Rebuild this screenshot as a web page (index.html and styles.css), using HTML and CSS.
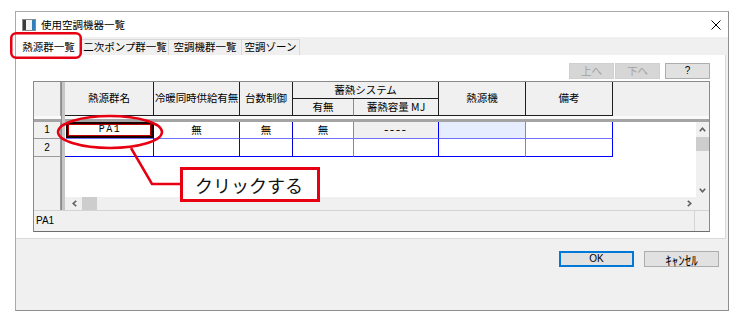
FILE: index.html
```html
<!DOCTYPE html>
<html lang="ja">
<head>
<meta charset="utf-8">
<title>使用空調機器一覧</title>
<link rel="stylesheet" href="styles.css">
</head>
<body>
<div class="screen">
  <div class="window">
    <div class="titlebar">
      <svg class="app-icon" width="14" height="12" viewBox="0 0 14 12">
        <rect x="0.5" y="0.5" width="13" height="11" fill="#f2f2f2" stroke="#8a8a8a"/>
        <rect x="1" y="1" width="3" height="10" fill="#3a3a3a"/>
        <rect x="10" y="1" width="3" height="10" fill="#2f7fb8"/>
      </svg>
      <span class="title">使用空調機器一覧</span>
      <svg class="close" width="10" height="10" viewBox="0 0 10 10">
        <path d="M0.5 0.5 L9.5 9.5 M9.5 0.5 L0.5 9.5" stroke="#000" stroke-width="1" fill="none"/>
      </svg>
    </div>
    <div class="client">
      <div class="tabs">
        <div class="tab active">熱源群一覧</div>
        <div class="tab t2">二次ポンプ群一覧</div>
        <div class="tab t3">空調機群一覧</div>
        <div class="tab t4">空調ゾーン</div>
      </div>
      <div class="page">
        <div class="toolbar">
          <div class="btn disabled">上へ</div>
          <div class="btn disabled">下へ</div>
          <div class="btn help">?</div>
        </div>
        <div class="grid-box">
          <div class="grid">
            <div class="corner"></div>
            <div class="vsep"></div>
            <div class="hd h-name">熱源群名</div>
            <div class="hd h-dual">冷暖同時供給有無</div>
            <div class="hd h-count">台数制御</div>
            <div class="hd h-group">蓄熱システム</div>
            <div class="hd h-has">有無</div>
            <div class="hd h-cap">蓄熱容量 MJ</div>
            <div class="hd h-src">熱源機</div>
            <div class="hd h-note">備考</div>
            <div class="h-fill"></div>
            <div class="hsep hsep-l"></div>
            <div class="hsep hsep-r"></div>

            <div class="rh rh1">1</div>
            <div class="rh rh2">2</div>
            <div class="rh-fill"></div>

            <div class="cell r1 k1 selected"><span class="mono">PA1</span></div>
            <div class="cell r1 k2">無</div>
            <div class="cell r1 k3">無</div>
            <div class="cell r1 k4">無</div>
            <div class="cell r1 k5 locked"><span class="dash">----</span></div>
            <div class="cell r1 k6 tinted"></div>
            <div class="cell r1 k7"></div>

            <div class="cell r2 k1"></div>
            <div class="cell r2 k2"></div>
            <div class="cell r2 k3"></div>
            <div class="cell r2 k4"></div>
            <div class="cell r2 k5"></div>
            <div class="cell r2 k6"></div>
            <div class="cell r2 k7"></div>

            <div class="data-fill"></div>
            <div class="blank"></div>

            <div class="vscroll">
              <div class="sb-arrow up">
                <svg width="7" height="5" viewBox="0 0 7 5"><polyline points="0.8,4.2 3.5,1.2 6.2,4.2" fill="none" stroke="#606060" stroke-width="1.6"/></svg>
              </div>
              <div class="vthumb"></div>
              <div class="sb-space"></div>
              <div class="sb-arrow down">
                <svg width="7" height="5" viewBox="0 0 7 5"><polyline points="0.8,0.8 3.5,3.8 6.2,0.8" fill="none" stroke="#606060" stroke-width="1.6"/></svg>
              </div>
            </div>
            <div class="hscroll">
              <div class="sb-arrow left">
                <svg width="5" height="7" viewBox="0 0 5 7"><polyline points="4.2,0.8 1.2,3.5 4.2,6.2" fill="none" stroke="#606060" stroke-width="1.6"/></svg>
              </div>
              <div class="hthumb"></div>
              <div class="sb-space"></div>
              <div class="sb-arrow right">
                <svg width="5" height="7" viewBox="0 0 5 7"><polyline points="0.8,0.8 3.8,3.5 0.8,6.2" fill="none" stroke="#606060" stroke-width="1.6"/></svg>
              </div>
            </div>
            <div class="sb-corner"></div>
          </div>
          <div class="status">
            <span class="status-text">PA1</span>
            <span class="status-sep"></span>
          </div>
        </div>
      </div>
      <div class="footer">
        <div class="btn dlg ok">OK</div>
        <div class="btn dlg cancel">ｷｬﾝｾﾙ</div>
      </div>
    </div>
  </div>
</div>

<svg class="annot" width="740" height="317" viewBox="0 0 740 317">
  <rect x="11.25" y="33.25" width="69.5" height="24.5" rx="5" ry="5" fill="none" stroke="#e60012" stroke-width="2.5"/>
  <ellipse cx="110" cy="132" rx="52" ry="16" fill="none" stroke="#e60012" stroke-width="2.5"/>
  <polyline points="131,148 152,184 181,184" fill="none" stroke="#e60012" stroke-width="2.5"/>
</svg>
<div class="callout">クリックする</div>
</body>
</html>
```

FILE: styles.css
```css
* { box-sizing: border-box; }

html, body {
  margin: 0;
  padding: 0;
}

body {
  position: relative;
  width: 740px;
  height: 317px;
  overflow: hidden;
  background: #fff;
  color: #000;
  font-family: "Liberation Sans", "Noto Sans CJK JP", sans-serif;
  font-size: 10.5px;
  line-height: 1;
}

.screen {
  padding: 11px 0 0 15px;
}

.window {
  width: 714px;
  height: 300px;
  border: 1px solid #a9a9a9;
  border-right-color: #8e8e8e;
  border-bottom-color: #8e8e8e;
  display: flex;
  flex-direction: column;
  background: #f0f0f0;
}

/* title bar */
.titlebar {
  height: 25px;
  flex: none;
  background: #fff;
  display: flex;
  align-items: center;
}
.app-icon { margin-left: 6px; flex: none; }
.title {
  margin-left: 5px;
  font-family: "Noto Sans CJK JP", sans-serif;
  font-size: 10.5px;
  line-height: 12px;
}
.close { margin-left: auto; margin-right: 7px; }

.client {
  flex: 1;
  display: flex;
  flex-direction: column;
}

/* tabs */
.tabs {
  height: 18px;
  flex: none;
  display: flex;
  align-items: flex-end;
}
.tab {
  height: 16px;
  display: flex;
  align-items: center;
  justify-content: center;
  border-left: 1px solid #d9d9d9;
  border-top: 1px solid #d9d9d9;
  background: #f0f0f0;
  font-family: "Noto Sans CJK JP", sans-serif;
  font-size: 10.5px;
}
.tab.active {
  width: 65px;
  height: 18px;
  border: none;
  background: #fff;
  padding-top: 2px;
}
.tab.t2 { width: 87px; }
.tab.t3 { width: 73px; }
.tab.t4 { width: 59px; border-right: 1px solid #d9d9d9; }

/* tab page */
.page {
  flex: none;
  height: 184px;
  margin-right: 2px;
  background: #fff;
  border-right: 1px solid #d9d9d9;
  border-bottom: 1px solid #d9d9d9;
  padding: 8px 15px 6px 17px;
}

.toolbar {
  height: 16px;
  margin-bottom: 2px;
  display: flex;
  justify-content: flex-end;
}

.btn {
  height: 16px;
  width: 45px;
  display: flex;
  align-items: center;
  justify-content: center;
  border: 1px solid #adadad;
  background: #e1e1e1;
  font-family: "Noto Sans CJK JP", sans-serif;
  font-size: 10.5px;
}
.btn.disabled {
  background: #d6d6d6;
  border-color: #d0d0d0;
  color: #a3a3a3;
  margin-right: 1px;
}
.btn.disabled + .btn.disabled { margin-right: 5px; }
.btn.help { font-family: "Liberation Sans", sans-serif; font-size: 10px; }

/* grid */
.grid-box {
  width: 677px;
  height: 151px;
  border: 1px solid #8a8a8a;
  border-bottom-color: #6e6e6e;
  display: flex;
  flex-direction: column;
}

.grid {
  display: grid;
  grid-template-columns: 27px 4px 89px 86px 53px 61px 85px 87px 87px 83px 13px;
  grid-template-rows: 17px 17px 6px 17px 18px 40px 13px;
  font-family: "Noto Sans CJK JP", sans-serif;
  font-size: 10.5px;
}

.corner {
  grid-column: 1;
  grid-row: 1 / 3;
  background: #f0f0f0;
  border-right: 1px solid #9a9a9a;
}
.vsep {
  grid-column: 2;
  grid-row: 1 / 8;
  background: linear-gradient(to right, #8c8c8c 0 1px, #c6c6c6 1px 4px);
}

.hd {
  background: #f0f0f0;
  border-right: 1px solid #1e1e1e;
  border-bottom: 1px solid #1e1e1e;
  display: flex;
  align-items: center;
  justify-content: center;
  white-space: nowrap;
}
.h-name { grid-column: 3; grid-row: 1 / 3; }
.h-dual { grid-column: 4; grid-row: 1 / 3; letter-spacing: -0.1px; }
.h-count { grid-column: 5; grid-row: 1 / 3; }
.h-group { grid-column: 6 / 8; grid-row: 1; }
.h-has { grid-column: 6; grid-row: 2; border-right-color: #8c8c8c; }
.h-cap { grid-column: 7; grid-row: 2; }
.h-src { grid-column: 8; grid-row: 1 / 3; }
.h-note { grid-column: 9; grid-row: 1 / 3; }
.h-fill {
  grid-column: 10 / 12;
  grid-row: 1 / 3;
  background: #f0f0f0;
}

.hsep {
  grid-row: 3;
  background: linear-gradient(to bottom, #fafafa 0 3px, #a4a4a4 3px 6px);
}
.hsep-l { grid-column: 1; }
.hsep-r { grid-column: 3 / 12; }

.rh {
  grid-column: 1;
  background: #f0f0f0;
  border-right: 1px solid #9a9a9a;
  border-bottom: 1px solid #9a9a9a;
  display: flex;
  align-items: center;
  justify-content: center;
  font-family: "Liberation Sans", sans-serif;
  font-size: 10px;
}
.rh1 { grid-row: 4; }
.rh2 { grid-row: 5; }
.rh-fill {
  grid-column: 1;
  grid-row: 6 / 8;
  background: #f0f0f0;
  border-right: 1px solid #9a9a9a;
}

.cell {
  background: #fff;
  border-right: 1px solid #0000ff;
  display: flex;
  align-items: center;
  justify-content: center;
}
.r1 { grid-row: 4; border-bottom: 1px solid #7070ff; }
.r2 { grid-row: 5; border-bottom: 1px solid #0000ff; }
.k1 { grid-column: 3; }
.k2 { grid-column: 4; }
.k3 { grid-column: 5; border-right-color: #0000d0; }
.k4 { grid-column: 6; border-right-color: #7c7cff; }
.k5 { grid-column: 7; }
.k6 { grid-column: 8; border-right-color: #7c7cff; }
.k7 { grid-column: 9; }

.cell.selected {
  border-right-color: #1a0000;
  box-shadow: inset 0 0 0 2px #1a0000, inset 0 0 0 3px #c00000;
  margin-left: 1px;
}
.cell.locked { background: #f0f0f0; }
.cell.tinted { background: #e6edff; }

.mono {
  font-family: "Liberation Mono", monospace;
  font-size: 10px;
  letter-spacing: 1.5px;
  margin-left: 1px;
}
.dash {
  font-family: "Liberation Sans", sans-serif;
  font-size: 10px;
  letter-spacing: 1px;
  transform: scaleX(1.35);
}

.data-fill {
  grid-column: 10;
  grid-row: 4 / 6;
  background: #fff;
}
.blank {
  grid-column: 3 / 11;
  grid-row: 6;
  background: #fff;
}

.vscroll {
  grid-column: 11;
  grid-row: 4 / 7;
  background: #f0f0f0;
  display: flex;
  flex-direction: column;
}
.sb-arrow {
  display: flex;
  align-items: center;
  justify-content: center;
  flex: none;
}
.sb-arrow.up { height: 15px; }
.sb-arrow.down { height: 14px; }
.vthumb { height: 14px; background: #cdcdcd; flex: none; }
.sb-space { flex: 1; }

.hscroll {
  grid-column: 3 / 11;
  grid-row: 7;
  background: #f0f0f0;
  display: flex;
}
.sb-arrow.left { width: 17px; justify-content: flex-end; padding-right: 5px; }
.sb-arrow.right { width: 15px; justify-content: flex-start; padding-left: 6px; }
.hthumb { width: 15px; background: #cdcdcd; flex: none; }

.sb-corner {
  grid-column: 11;
  grid-row: 7;
  background: #f0f0f0;
}

.status {
  flex: 1;
  background: #f0f0f0;
  border-top: 1px solid #d4d4d4;
  display: flex;
  align-items: center;
}
.status-text {
  margin-left: 2px;
  font-family: "Liberation Sans", sans-serif;
  font-size: 10px;
}
.status-sep {
  margin-left: auto;
  margin-right: 14px;
  width: 1px;
  align-self: stretch;
  background: #d4d4d4;
}

/* footer */
.footer {
  flex: 1;
  display: flex;
  justify-content: flex-end;
  align-items: flex-start;
  padding: 12px 9px 0 0;
  gap: 10px;
}
.btn.dlg { width: 75px; }
.btn.ok {
  border-color: #0078d7;
  box-shadow: inset 0 0 0 1px #0078d7;
  font-family: "Liberation Sans", sans-serif;
  font-size: 10px;
}
.btn.cancel { font-size: 13px; }

/* annotations (overlay) */
.annot {
  position: absolute;
  left: 0;
  top: 0;
  pointer-events: none;
}
.callout {
  position: absolute;
  left: 180px;
  top: 167px;
  width: 140px;
  height: 35px;
  border: 3px solid #e60012;
  background: #fff;
  display: flex;
  align-items: center;
  padding-left: 12px;
  font-family: "Noto Sans CJK JP", sans-serif;
  font-size: 18px;
  color: #111;
}
```
